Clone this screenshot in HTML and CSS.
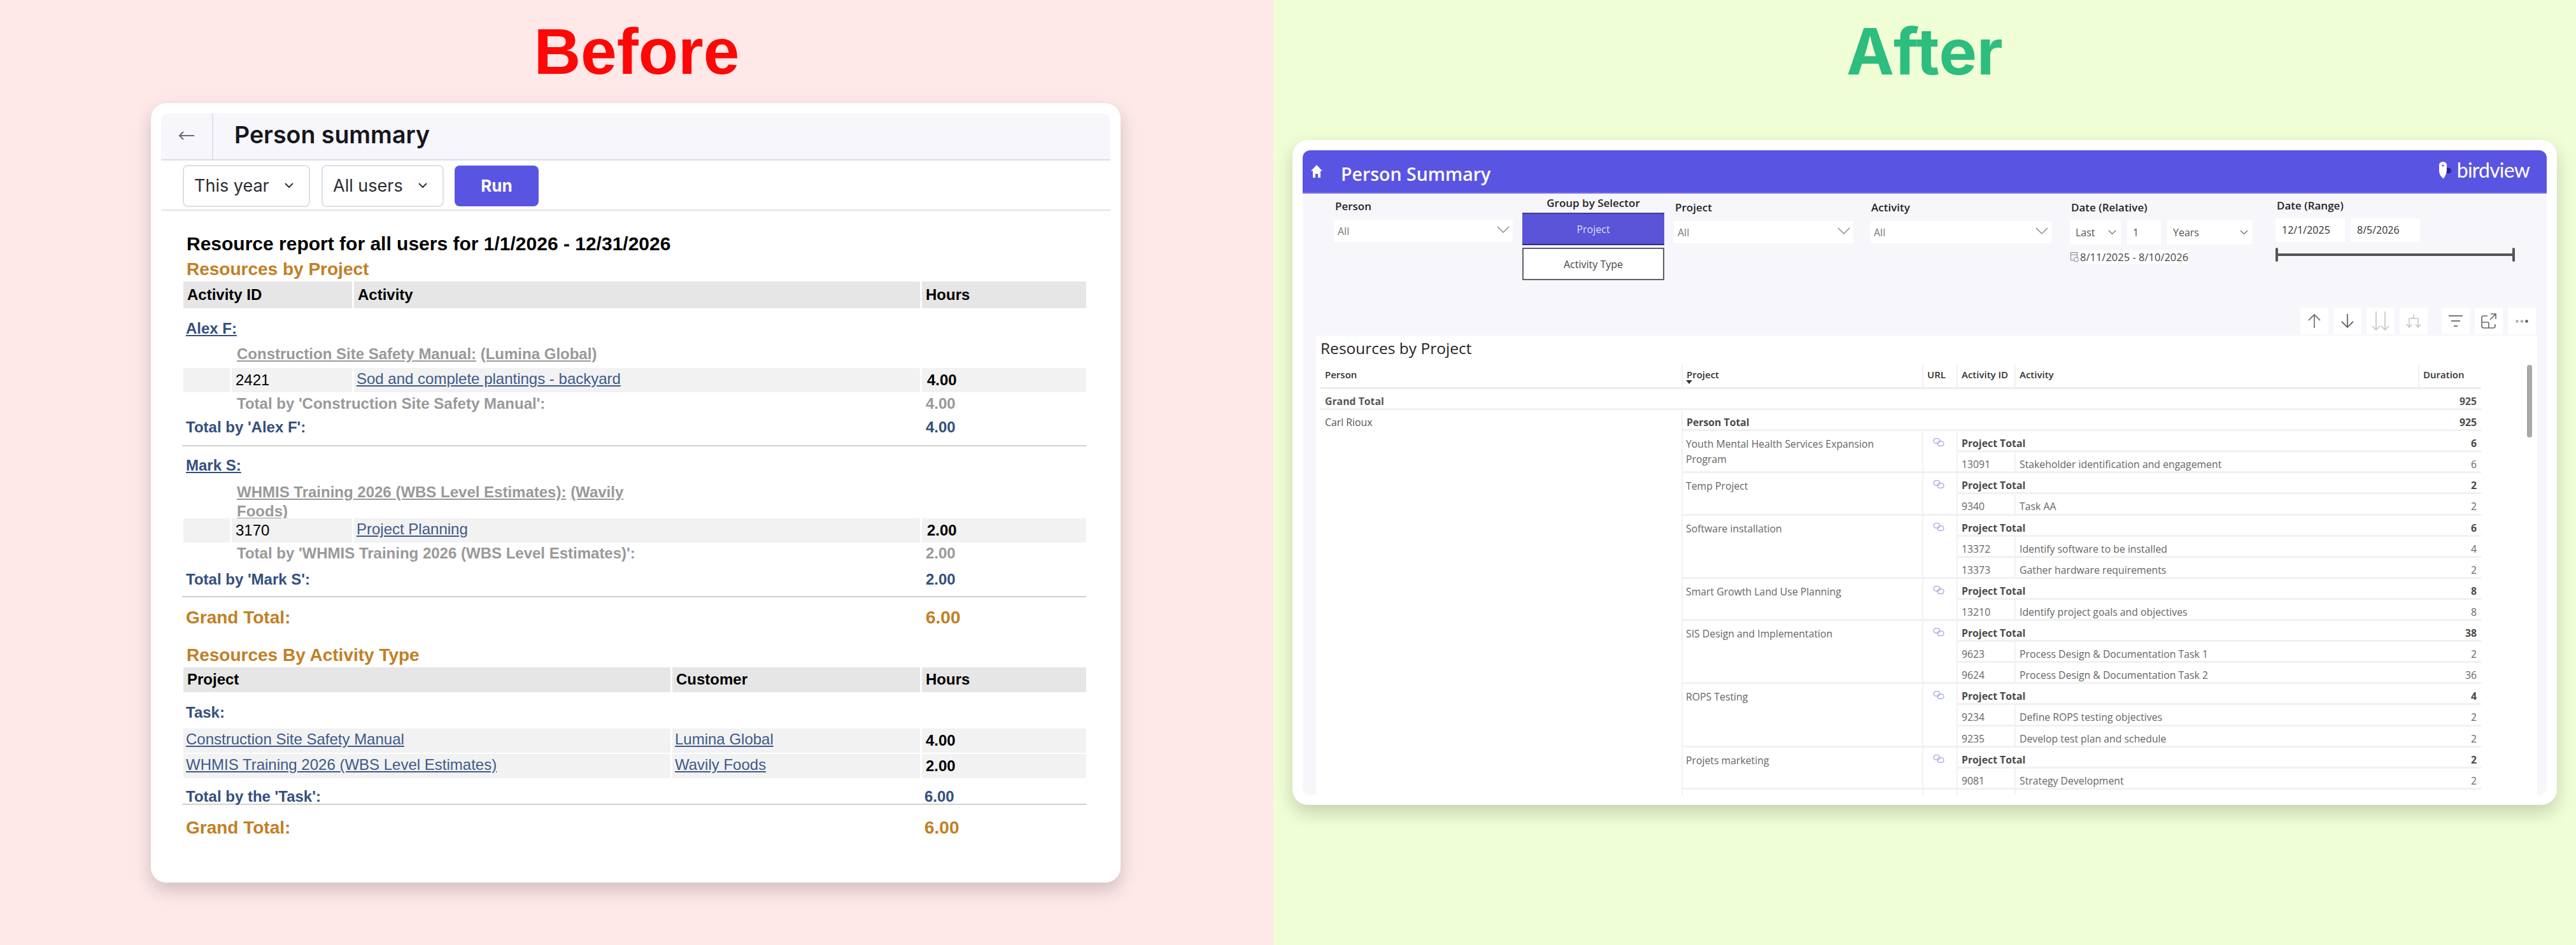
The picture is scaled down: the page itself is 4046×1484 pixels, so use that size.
FILE: index.html
```html
<!DOCTYPE html>
<html lang="en">
<head>
  <meta charset="UTF-8">
  <title>Person summary: before and after</title>
  <link rel="stylesheet" href="styles.css">
</head>
<body>
<div class="compare">

  <!-- BEFORE -->
  <section class="panel panel-before">
    <h1 class="panel-title title-before">Before</h1>
    <div class="card card-before">
      <div class="old-header">
        <div class="old-back">
          <svg width="26" height="16" viewBox="0 0 26 16" fill="none" stroke="#6b6b76" stroke-width="2"><path d="M25 8H2M8 2 2 8l6 6"/></svg>
        </div>
        <div class="old-title">Person summary</div>
      </div>
      <div class="old-filters">
        <div class="old-select select-year">This year <svg width="14" height="9" viewBox="0 0 14 9" fill="none" stroke="#333" stroke-width="2"><path d="m1 1 6 6 6-6"/></svg></div>
        <div class="old-select select-users">All users <svg width="14" height="9" viewBox="0 0 14 9" fill="none" stroke="#333" stroke-width="2"><path d="m1 1 6 6 6-6"/></svg></div>
        <div class="old-run">Run</div>
      </div>
      <div class="report">
        <div class="report-title">Resource report for all users for 1/1/2026 - 12/31/2026</div>
        <div class="report-section">Resources by Project</div>
        <div class="rpt-row rpt-head">
          <div class="span-2">Activity ID</div><div>Activity</div><div>Hours</div>
        </div>

        <div class="rpt-line person-line"><a>Alex F:</a></div>
        <div class="rpt-line project-line"><a>Construction Site Safety Manual:</a> <a>(Lumina Global)</a></div>
        <div class="rpt-row rpt-data">
          <div></div><div class="num-cell">2421</div><div><a>Sod and complete plantings - backyard</a></div><div class="hrs">4.00</div>
        </div>
        <div class="rpt-total total-project h-40"><span>Total by 'Construction Site Safety Manual':</span><span>4.00</span></div>
        <div class="rpt-total total-person h-34"><span>Total by 'Alex F':</span><span>4.00</span></div>
        <div class="rpt-rule rule-1"></div>

        <div class="rpt-line person-line mark-line"><a>Mark S:</a></div>
        <div class="rpt-line project-line project-wrap"><a>WHMIS Training 2026 (WBS Level Estimates):</a> <a>(Wavily</a> <a>Foods)</a></div>
        <div class="rpt-row rpt-data">
          <div></div><div class="num-cell">3170</div><div><a>Project Planning</a></div><div class="hrs">2.00</div>
        </div>
        <div class="rpt-total total-project h-38"><span>Total by 'WHMIS Training 2026 (WBS Level Estimates)':</span><span>2.00</span></div>
        <div class="rpt-total total-person h-44"><span>Total by 'Mark S':</span><span>2.00</span></div>
        <div class="rpt-rule rule-2"></div>
        <div class="rpt-total total-grand grand-1"><span>Grand Total:</span><span>6.00</span></div>

        <div class="report-section section-2">Resources By Activity Type</div>
        <div class="rpt-row2 rpt-head head-2">
          <div>Project</div><div>Customer</div><div>Hours</div>
        </div>
        <div class="rpt-line person-line task-line">Task:</div>
        <div class="rpt-row2 rpt-data">
          <div><a>Construction Site Safety Manual</a></div><div><a>Lumina Global</a></div><div class="hrs2">4.00</div>
        </div>
        <div class="rpt-row2 rpt-data data-next">
          <div><a>WHMIS Training 2026 (WBS Level Estimates)</a></div><div><a>Wavily Foods</a></div><div class="hrs2">2.00</div>
        </div>
        <div class="rpt-total total-person total-task"><span>Total by the 'Task':</span><span class="val-task">6.00</span></div>
        <div class="rpt-rule"></div>
        <div class="rpt-total total-grand grand-2"><span>Grand Total:</span><span class="val-task">6.00</span></div>
      </div>
    </div>
  </section>

  <!-- AFTER -->
  <section class="panel panel-after">
    <h1 class="panel-title title-after">After</h1>
    <div class="card card-after">
      <div class="dash">
        <div class="dash-bar">
          <svg class="home-icon" width="18" height="20" viewBox="0 0 18 20" fill="#fff"><path d="M9 0 18 9.500h-3V20h-4v-6H7v6H3V9.500H0z"/></svg>
          <div class="dash-title">Person Summary</div>
          <div class="brand">
            <svg width="20" height="27" viewBox="0 0 20 27"><circle cx="14.500" cy="14" r="4.500" fill="#2a2390"/><path d="M0 5a6 5 0 0 1 12 0v8q0 6-5 13.500Q0 22 0 14z" fill="#fff"/><circle cx="6" cy="6" r="1.600" fill="#5a54e3"/></svg>
            <span>birdview</span>
          </div>
        </div>

        <div class="slicers">
          <div class="slicer slicer-person">
            <div class="slicer-label">Person</div>
            <div class="drop">All <svg class="chev" width="20" height="11" viewBox="0 0 20 11" fill="none" stroke="#777" stroke-width="1.200"><path d="m1 1 9 9 9-9"/></svg></div>
          </div>
          <div class="slicer slicer-group">
            <div class="slicer-label group-label">Group by Selector</div>
            <div class="group-btn group-on">Project</div>
            <div class="group-btn group-off">Activity Type</div>
          </div>
          <div class="slicer slicer-project">
            <div class="slicer-label">Project</div>
            <div class="drop">All <svg class="chev" width="20" height="11" viewBox="0 0 20 11" fill="none" stroke="#777" stroke-width="1.200"><path d="m1 1 9 9 9-9"/></svg></div>
          </div>
          <div class="slicer slicer-activity">
            <div class="slicer-label">Activity</div>
            <div class="drop">All <svg class="chev" width="20" height="11" viewBox="0 0 20 11" fill="none" stroke="#777" stroke-width="1.200"><path d="m1 1 9 9 9-9"/></svg></div>
          </div>
          <div class="slicer slicer-relative">
            <div class="slicer-label">Date (Relative)</div>
            <div class="rel-row">
              <div class="rel-box rel-last">Last <svg width="13" height="8" viewBox="0 0 13 8" fill="none" stroke="#666" stroke-width="1.200"><path d="m1 1 5.500 5.500L12 1"/></svg></div>
              <div class="rel-box rel-num">1</div>
              <div class="rel-box rel-unit">Years <svg width="13" height="8" viewBox="0 0 13 8" fill="none" stroke="#666" stroke-width="1.200"><path d="m1 1 5.500 5.500L12 1"/></svg></div>
            </div>
            <div class="rel-range">
              <svg width="13" height="16" viewBox="0 0 13 16" fill="none" stroke="#888" stroke-width="1"><rect x=".5" y=".5" width="10" height="12"/><path d="M.5 4h10"/><circle cx="9" cy="11.500" r="3.500" fill="#f6f6fb"/></svg>
              <span>8/11/2025 - 8/10/2026</span>
            </div>
          </div>
          <div class="slicer slicer-range">
            <div class="slicer-label">Date (Range)</div>
            <div class="range-row">
              <div class="range-box">12/1/2025</div>
              <div class="range-box">8/5/2026</div>
            </div>
            <div class="range-slider"><i></i><b></b><i></i></div>
          </div>
        </div>

        <div class="toolbar">
          <div class="tool-group">
            <div class="tool"><svg width="20" height="24" viewBox="0 0 20 24" fill="none" stroke="#777" stroke-width="1.800"><path d="M10 23V2M1 11l9-9 9 9"/></svg></div>
            <div class="tool"><svg width="20" height="24" viewBox="0 0 20 24" fill="none" stroke="#666" stroke-width="1.800"><path d="M10 1v21M1 13l9 9 9-9"/></svg></div>
            <div class="tool"><svg width="28" height="30" viewBox="0 0 28 30" fill="none" stroke="#c4c4c4" stroke-width="1.600"><path d="M7 0v29M1 23l6 6 6-6M21 0v29M15 23l6 6 6-6"/></svg></div>
            <div class="tool"><svg width="24" height="22" viewBox="0 0 24 22" fill="none" stroke="#c4c4c4" stroke-width="1.500"><path d="M12 0v7M5 21V7h14v14M1 16l4 5 4-5M15 16l4 5 4-5"/></svg></div>
          </div>
          <div class="tool-group">
            <div class="tool"><svg width="22" height="18" viewBox="0 0 22 18" fill="none" stroke="#777" stroke-width="1.800"><path d="M0 1h22M4 9h14M8 17h6"/></svg></div>
            <div class="tool"><svg width="24" height="24" viewBox="0 0 24 24" fill="none" stroke="#666" stroke-width="1.600"><path d="M10 4H4a3 3 0 0 0-3 3v13a3 3 0 0 0 3 3h15a3 3 0 0 0 3-3v-3M1 14h9a2 2 0 0 1 2 2v7M15 1h8v8M23 1l-9 9"/></svg></div>
            <div class="tool"><svg width="20" height="5" viewBox="0 0 20 5"><circle cx="2.500" cy="2.500" r="2.200" fill="#aaa"/><circle cx="10" cy="2.500" r="2.200" fill="#aaa"/><circle cx="17.500" cy="2.500" r="2.200" fill="#555"/></svg></div>
          </div>
        </div>

        <div class="visual">
          <div class="visual-title">Resources by Project</div>
          <div class="scroll-thumb"></div>
          <div class="matrix">
            <div class="mh">Person</div>
            <div class="mh mh-project">Project<span class="sort-mark"></span></div>
            <div class="mh">URL</div>
            <div class="mh">Activity ID</div>
            <div class="mh">Activity</div>
            <div class="mh">Duration</div>

            <div class="mc grand span-5">Grand Total</div>
            <div class="mc grand right">925</div>

            <div class="mc person-cell">Carl Rioux</div>
            <div class="mc bold span-4 left-line">Person Total</div>
            <div class="mc bold right">925</div>

            <div class="mc project-cell rows-2">Youth Mental Health Services Expansion Program</div>
            <div class="mc url-cell rows-2"><svg class="link-icon"><use href="#link"/></svg></div>
            <div class="mc bold span-2 left-line">Project Total</div><div class="mc bold right">6</div>
            <div class="mc left-line">13091</div><div class="mc left-line">Stakeholder identification and engagement</div><div class="mc right">6</div>

            <div class="mc project-cell rows-2">Temp Project</div>
            <div class="mc url-cell rows-2"><svg class="link-icon"><use href="#link"/></svg></div>
            <div class="mc bold span-2 left-line">Project Total</div><div class="mc bold right">2</div>
            <div class="mc left-line">9340</div><div class="mc left-line">Task AA</div><div class="mc right">2</div>

            <div class="mc project-cell rows-3">Software installation</div>
            <div class="mc url-cell rows-3"><svg class="link-icon"><use href="#link"/></svg></div>
            <div class="mc bold span-2 left-line">Project Total</div><div class="mc bold right">6</div>
            <div class="mc left-line">13372</div><div class="mc left-line">Identify software to be installed</div><div class="mc right">4</div>
            <div class="mc left-line">13373</div><div class="mc left-line">Gather hardware requirements</div><div class="mc right">2</div>

            <div class="mc project-cell rows-2">Smart Growth Land Use Planning</div>
            <div class="mc url-cell rows-2"><svg class="link-icon"><use href="#link"/></svg></div>
            <div class="mc bold span-2 left-line">Project Total</div><div class="mc bold right">8</div>
            <div class="mc left-line">13210</div><div class="mc left-line">Identify project goals and objectives</div><div class="mc right">8</div>

            <div class="mc project-cell rows-3">SIS Design and Implementation</div>
            <div class="mc url-cell rows-3"><svg class="link-icon"><use href="#link"/></svg></div>
            <div class="mc bold span-2 left-line">Project Total</div><div class="mc bold right">38</div>
            <div class="mc left-line">9623</div><div class="mc left-line">Process Design &amp; Documentation Task 1</div><div class="mc right">2</div>
            <div class="mc left-line">9624</div><div class="mc left-line">Process Design &amp; Documentation Task 2</div><div class="mc right">36</div>

            <div class="mc project-cell rows-3">ROPS Testing</div>
            <div class="mc url-cell rows-3"><svg class="link-icon"><use href="#link"/></svg></div>
            <div class="mc bold span-2 left-line">Project Total</div><div class="mc bold right">4</div>
            <div class="mc left-line">9234</div><div class="mc left-line">Define ROPS testing objectives</div><div class="mc right">2</div>
            <div class="mc left-line">9235</div><div class="mc left-line">Develop test plan and schedule</div><div class="mc right">2</div>

            <div class="mc project-cell rows-2">Projets marketing</div>
            <div class="mc url-cell rows-2"><svg class="link-icon"><use href="#link"/></svg></div>
            <div class="mc bold span-2 left-line">Project Total</div><div class="mc bold right">2</div>
            <div class="mc left-line">9081</div><div class="mc left-line">Strategy Development</div><div class="mc right">2</div>

            <div class="mc project-cell"></div>
            <div class="mc url-cell"></div>
            <div class="mc left-line"></div><div class="mc left-line"></div><div class="mc"></div>
          </div>
        </div>
      </div>
    </div>
  </section>
</div>

<svg width="0" height="0" class="defs">
  <symbol id="link" viewBox="0 0 18 13">
    <g fill="none" stroke="#a3a8dc" stroke-width="1.300">
      <rect x="1" y=".7" width="10" height="7.500" rx="3.700"/>
      <rect x="7" y="4.800" width="10" height="7.500" rx="3.700"/>
    </g>
  </symbol>
</svg>
</body>
</html>
```

FILE: styles.css
```css
* {
  box-sizing: border-box;
}
html, body {
  margin: 0;
  padding: 0;
}
body {
  font-family: "Liberation Sans", Arial, sans-serif;
  overflow: hidden;
}
.defs {
  display: block;
  height: 0;
}
.compare {
  display: flex;
  width: 4046px;
  height: 1484px;
}
.panel {
  height: 1484px;
}
.panel-before {
  width: 2000px;
  background-color: #fee8e8;
  padding-left: 237px;
}
.panel-after {
  width: 2046px;
  background-color: #f0fed6;
  padding-left: 30px;
}
.panel-title {
  margin: 0;
  height: 162px;
  line-height: 162px;
  font-size: 102px;
  font-weight: bold;
  text-align: center;
}
.title-before {
  width: 1526px;
  color: #ff0707;
}
.title-after {
  width: 1986px;
  margin-bottom: 58px;
  font-family: Inter, sans-serif;
  font-size: 100px;
  font-weight: 700;
  color: #2dbd7e;
}
.card {
  background-color: #fff;
  border-radius: 24px;
  box-shadow: 0 12px 28px rgba(0,0,0,0.18);
  padding: 16px;
}
.card-before {
  width: 1523px;
  height: 1224px;
}
.card-after {
  width: 1986px;
  height: 1044px;
}

/* old report */
.old-header {
  display: flex;
  align-items: stretch;
  height: 74px;
  background-color: #f6f6fb;
  border-bottom: 2px solid #dcdce4;
  border-radius: 12px 12px 0 0;
}
.old-back {
  width: 82px;
  border-right: 2px solid #e0e0e8;
  display: flex;
  align-items: center;
  justify-content: center;
  padding-bottom: 2px;
}
.old-title {
  padding-left: 33px;
  line-height: 68px;
  font-family: Inter, sans-serif;
  font-size: 37.500px;
  font-weight: 600;
  color: #16161d;
}
.old-filters {
  display: flex;
  align-items: center;
  height: 79px;
  padding: 2px 0 0 34px;
  border-bottom: 2px solid #e2e2e8;
}
.old-select {
  display: flex;
  align-items: center;
  justify-content: space-between;
  height: 66px;
  padding: 0 24px 0 16px;
  border: 2px solid #dfdfe8;
  border-radius: 8px;
  font-family: Inter, sans-serif;
  font-size: 27px;
  color: #2c2c33;
}
.select-year {
  width: 200px;
}
.select-users {
  width: 192px;
  margin-left: 18px;
}
.old-run {
  width: 132px;
  height: 64px;
  margin-left: 17px;
  line-height: 64px;
  text-align: center;
  background-color: #5a54e3;
  border-radius: 8px;
  color: #fff;
  font-family: Inter, sans-serif;
  font-size: 26px;
  font-weight: 700;
}
.report {
  padding: 33px 0 0 35px;
  width: 1453px;
}
.report-title {
  height: 40px;
  line-height: 38px;
  padding-left: 5px;
  font-size: 30px;
  font-weight: bold;
  color: #000;
}
.report-section {
  height: 38px;
  line-height: 38px;
  padding-left: 5px;
  font-size: 28px;
  font-weight: bold;
  color: #c27f25;
}
.section-2 {
  margin-top: 20px;
}
.rpt-row, .rpt-row2 {
  display: grid;
  column-gap: 3px;
}
.rpt-row {
  grid-template-columns: 73px 189px 889px 258px;
}
.rpt-row2 {
  grid-template-columns: 765px 389px 258px;
}
.rpt-row .span-2 {
  grid-column: span 2;
}
.rpt-head {
  height: 42px;
  line-height: 42px;
  font-size: 24px;
  font-weight: bold;
  color: #000;
}
.rpt-head div {
  background-color: #e6e6e6;
  padding-left: 6px;
}
.head-2 {
  height: 39px;
  line-height: 38px;
}
.rpt-line {
  height: 40px;
  line-height: 40px;
  font-size: 24px;
  padding-left: 4px;
}
.rpt-line a, .rpt-data a {
  text-decoration: underline;
}
.person-line {
  margin-top: 12px;
  color: #344f7f;
  font-weight: bold;
}
.mark-line {
  margin-top: 9px;
}
.task-line {
  margin-top: 12px;
  margin-bottom: 5px;
}
.project-line {
  height: 42px;
  margin-top: 0;
  padding-left: 84px;
  color: #999;
  font-weight: bold;
}
.project-wrap {
  width: 730px;
  height: 63px;
  padding-top: 7px;
  line-height: 30px;
  overflow: hidden;
}
.rpt-data {
  height: 36px;
  font-size: 24px;
  color: #000;
}
.rpt-data div {
  background-color: #f2f2f2;
  line-height: 34px;
  padding-left: 4px;
}
.rpt-data a {
  color: #3d5a8a;
}
.data-next {
  margin-top: 4px;
}
.rpt-data .num-cell {
  line-height: 38px;
  padding-left: 6px;
}
.rpt-data .hrs {
  font-weight: bold;
  padding-left: 8px;
  line-height: 38px;
}
.rpt-data .hrs2 {
  font-weight: bold;
  padding-left: 6px;
  line-height: 38px;
}
.rpt-total {
  display: grid;
  grid-template-columns: 1166px 1fr;
  font-weight: bold;
  font-size: 24px;
}
.rpt-total span:first-child {
  padding-left: 4px;
  white-space: nowrap;
}
.rpt-total .val-task {
  margin-left: -2px;
}
.total-project {
  color: #999;
}
.rpt-total.total-project span:first-child {
  padding-left: 84px;
}
.total-person {
  color: #344f7f;
}
.h-40 { height: 40px; line-height: 40px; }
.h-38 { height: 38px; line-height: 38px; }
.h-34 { height: 34px; line-height: 34px; }
.h-44 { height: 44px; line-height: 44px; }
.total-task {
  height: 33px;
  margin-top: 9px;
  line-height: 44px;
}
.rpt-rule {
  height: 3px;
  border-bottom: 1px solid #fff;
  background-color: #ccd4cc;
  margin-left: -2px;
  width: 1420px;
}
.rule-1 {
  margin-top: 11px;
}
.rule-2 {
  margin-top: 4px;
}
.total-grand {
  height: 40px;
  line-height: 40px;
  font-size: 28px;
  color: #c27f25;
}
.grand-1 {
  margin-top: 11px;
}
.grand-2 {
  margin-top: 15px;
}

/* new dashboard */
.dash {
  height: 1012px;
  background-color: #f6f6fb;
  border-radius: 12px;
  overflow: hidden;
  font-family: "Open Sans", sans-serif;
}
.dash-bar {
  display: flex;
  align-items: center;
  height: 68px;
  padding: 0 27px 0 13px;
  background-color: #5a54e3;
  border-bottom: 2px solid #7671ea;
  color: #fff;
}
.dash-title {
  margin: 8px 0 0 29px;
  font-size: 28.500px;
  font-weight: 600;
  flex: 1;
}
.brand {
  display: flex;
  align-items: center;
  gap: 8px;
  font-family: Lato, sans-serif;
  font-size: 32px;
  letter-spacing: -0.8px;
  line-height: 30px;
}
.brand span {
  margin-bottom: 4px;
}
.brand svg {
  margin-bottom: 4px;
}
.slicers {
  display: flex;
  align-items: flex-start;
  height: 179px;
  padding-left: 49px;
}
.slicer-label {
  font-size: 17px;
  font-weight: 600;
  color: #252423;
  line-height: 22px;
  padding-left: 2px;
}
.slicer-person { width: 281px; padding-top: 9px; }
.slicer-group { width: 223px; margin-left: 15px; padding-top: 4px; }
.slicer-project { width: 282px; margin-left: 15px; padding-top: 11px; }
.slicer-activity { width: 285px; margin-left: 26px; padding-top: 11px; }
.slicer-relative { width: 290px; margin-left: 29px; padding-top: 11px; }
.slicer-range { width: 380px; margin-left: 33px; padding-top: 8px; }
.drop {
  display: flex;
  align-items: center;
  justify-content: space-between;
  height: 35px;
  margin-top: 10px;
  padding: 0 5px 0 6px;
  background-color: #fff;
  font-size: 16px;
  color: #777;
}
.chev {
  margin-bottom: 5px;
}
.group-label {
  text-align: center;
  padding-left: 0;
  height: 26px;
}
.group-btn {
  height: 51px;
  line-height: 49px;
  text-align: center;
  font-size: 16px;
}
.group-on {
  background-color: #5a54d8;
  border-top: 2px solid #3f3c9a;
  border-bottom: 2px solid #2d2b7a;
  color: #dcdcf6;
}
.group-off {
  margin-top: 4px;
  background-color: #fff;
  border: 2px solid #5f5f68;
  color: #444;
}
.rel-row {
  display: flex;
  height: 38px;
  margin-top: 9px;
  gap: 10px;
}
.rel-box {
  display: flex;
  align-items: center;
  justify-content: space-between;
  background-color: #fff;
  padding: 0 7px 0 9px;
  font-size: 16px;
  color: #555;
}
.rel-last { width: 80px; }
.rel-num { width: 53px; }
.rel-unit { width: 134px; }
.rel-range {
  display: flex;
  align-items: center;
  gap: 2px;
  margin-top: 9px;
  padding-left: 1px;
  height: 22px;
  font-size: 16.500px;
  color: #444;
}
.rel-range span {
  background-color: #fff;
  line-height: 22px;
}
.range-row {
  display: flex;
  gap: 9px;
  margin-top: 9px;
}
.range-box {
  width: 109px;
  height: 37px;
  line-height: 37px;
  padding-left: 10px;
  background-color: #fff;
  font-size: 16px;
  color: #333;
}
.range-slider {
  display: flex;
  align-items: center;
  width: 376px;
  height: 22px;
  margin-top: 9px;
}
.range-slider i {
  display: block;
  width: 4px;
  height: 22px;
  border-radius: 2px;
  background-color: #555;
}
.range-slider b {
  display: block;
  flex: 1;
  height: 4px;
  background-color: #555;
}
.toolbar {
  display: flex;
  justify-content: flex-end;
  gap: 22px;
  height: 42px;
  padding-right: 17px;
}
.tool-group {
  display: flex;
  gap: 8px;
}
.tool {
  display: flex;
  align-items: center;
  justify-content: center;
  width: 44px;
  height: 42px;
  background-color: #fff;
}
.visual {
  position: relative;
  height: 721px;
  margin: 2px 15px 0 21px;
  padding: 0 0 0 7px;
  background-color: #fff;
  overflow: hidden;
}
.visual-title {
  height: 46px;
  line-height: 40px;
  font-size: 24.500px;
  color: #252423;
}
.scroll-thumb {
  position: absolute;
  top: 46px;
  left: 1902px;
  width: 8px;
  height: 114px;
  border-radius: 4px;
  background-color: #a8a8a8;
}
.matrix {
  display: grid;
  grid-template-columns: 567px 378px 54px 91px 634px 99px;
  grid-template-rows: 38px;
  grid-auto-rows: 33.100px;
  width: 1823px;
  font-size: 15.800px;
  color: #666;
}
.mh {
  position: relative;
  padding: 3px 6px 0;
  font-size: 15px;
  font-weight: 600;
  line-height: 24px;
  color: #333;
  border-left: 2px solid #f1f1f3;
  border-bottom: 3px solid #ededf0;
  white-space: nowrap;
}
.mh:first-child {
  border-left: none;
  padding-left: 7px;
}
.sort-mark {
  position: absolute;
  left: 5px;
  top: 24px;
  width: 0;
  height: 0;
  border-left: 5px solid transparent;
  border-right: 5px solid transparent;
  border-top: 6px solid #333;
}
.mc {
  padding: 4px 7px 0;
  line-height: 30px;
  border-bottom: 3px solid #f1f1f3;
  white-space: nowrap;
}
.grand {
  font-weight: 700;
  color: #555;
}
.bold {
  font-weight: 700;
  color: #4a4a4a;
}
.right {
  text-align: right;
}
.span-5 { grid-column: span 5; }
.span-4 { grid-column: span 4; }
.span-2 { grid-column: span 2; }
.rows-2 { grid-row: span 2; }
.rows-3 { grid-row: span 3; }
.left-line {
  border-left: 2px solid #f1f1f3;
  padding-left: 6px;
}
.person-cell {
  grid-row: span 20;
  border-bottom: none;
  color: #555;
}
.project-cell {
  border-left: 2px solid #f1f1f3;
  white-space: normal;
  line-height: 24px;
  padding: 8px 40px 0 5px;
}
.url-cell {
  border-left: 2px solid #f1f1f3;
  padding: 11px 0 0 15px;
}
.link-icon {
  display: block;
  width: 18px;
  height: 13px;
}
```
